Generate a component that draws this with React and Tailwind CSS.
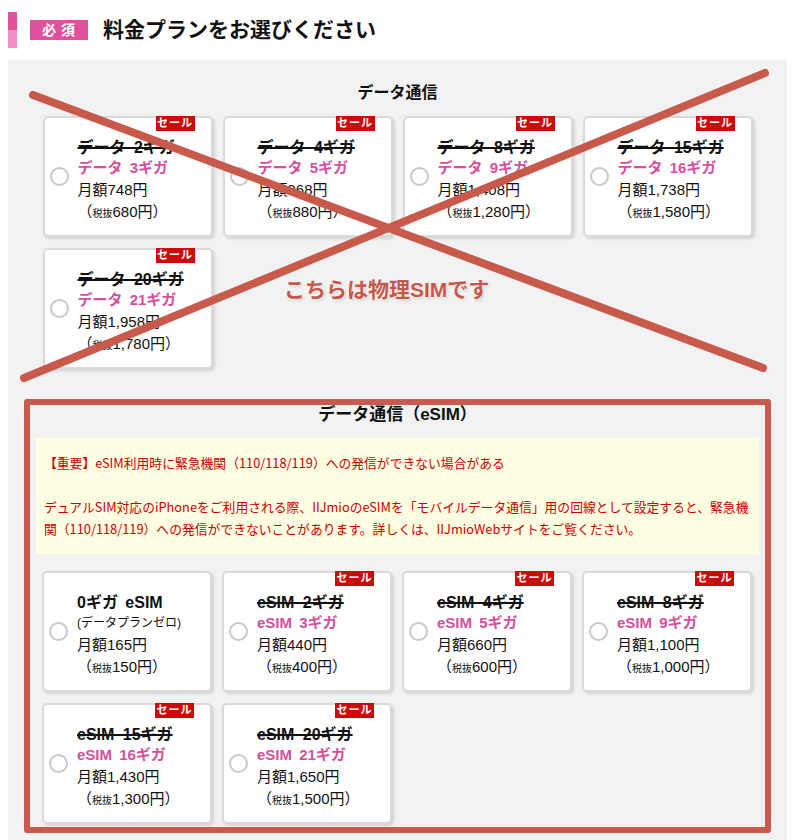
import React from "react";

const dataPlans = [
  { strike: "データ 2ギガ", pink: "データ 3ギガ", price: "748", tax: "680" },
  { strike: "データ 4ギガ", pink: "データ 5ギガ", price: "968", tax: "880" },
  { strike: "データ 8ギガ", pink: "データ 9ギガ", price: "1,408", tax: "1,280" },
  { strike: "データ 15ギガ", pink: "データ 16ギガ", price: "1,738", tax: "1,580" },
  { strike: "データ 20ギガ", pink: "データ 21ギガ", price: "1,958", tax: "1,780" },
];

const esimPlans = [
  { plain: "0ギガ eSIM", sub: "(データプランゼロ)", price: "165", tax: "150" },
  { strike: "eSIM 2ギガ", pink: "eSIM 3ギガ", price: "440", tax: "400" },
  { strike: "eSIM 4ギガ", pink: "eSIM 5ギガ", price: "660", tax: "600" },
  { strike: "eSIM 8ギガ", pink: "eSIM 9ギガ", price: "1,100", tax: "1,000" },
  { strike: "eSIM 15ギガ", pink: "eSIM 16ギガ", price: "1,430", tax: "1,300" },
  { strike: "eSIM 20ギガ", pink: "eSIM 21ギガ", price: "1,650", tax: "1,500" },
];

function Card({ p }) {
  const sale = !!p.strike;
  return (
    <div className="relative h-[121px] bg-white border-2 border-[#d9d9d9] rounded-[5px] shadow-[2px_2px_3px_rgba(0,0,0,0.13)] flex items-center pl-[5px]">
      {sale && (
        <div className="absolute top-[-2px] right-[16px] w-[39px] h-[15px] bg-[#cc0a0a] text-white text-[11px] font-bold leading-[15px] text-center tracking-[1px]">
          セール
        </div>
      )}
      <div className="w-[19px] h-[19px] rounded-full border-2 border-[#cacaca] bg-white shrink-0" />
      <div className="ml-[9px] pt-[9px] text-[#111]">
        {sale ? (
          <>
            <div className="text-[16px] font-bold leading-[20px] line-through decoration-[1.5px] whitespace-nowrap [word-spacing:4px]">
              {p.strike}
            </div>
            <div className="text-[15px] font-bold leading-[20px] text-[#d4509d] whitespace-nowrap [word-spacing:3px]">
              {p.pink}
            </div>
          </>
        ) : (
          <>
            <div className="text-[16px] font-bold leading-[20px] whitespace-nowrap [word-spacing:3px]">
              {p.plain}
            </div>
            <div className="text-[12px] leading-[20px] whitespace-nowrap">{p.sub}</div>
          </>
        )}
        <div className="text-[15px] leading-[24px] whitespace-nowrap">月額{p.price}円</div>
        <div className="text-[15px] leading-[20px] whitespace-nowrap">
          （<span className="text-[10px]">税抜</span>
          {p.tax}円）
        </div>
      </div>
    </div>
  );
}

export default function App() {
  return (
    <div className="relative w-[800px] h-[840px] overflow-hidden bg-white [font-family:'Liberation_Sans','Noto_Sans_CJK_JP',sans-serif]">
      {/* Header */}
      <div className="h-[60px] flex items-center pl-[8px]">
        <div className="w-[9px] h-[36px] flex flex-col">
          <div className="h-[18px] bg-[#e0529c]" />
          <div className="h-[18px] bg-[#f08fc4]" />
        </div>
        <div className="ml-[13px] w-[58px] h-[20px] bg-[#df519b] text-white text-[14px] font-bold leading-[20px] text-center tracking-[5px] pl-[4px]">
          必須
        </div>
        <div className="ml-[15px] text-[21px] font-bold text-[#111] leading-[28px]">
          料金プランをお選びください
        </div>
      </div>

      {/* Panel */}
      <div className="ml-[8px] w-[779px] bg-[#f2f2f2] px-[16px] pt-[21px] pb-[10px]">
        <div className="text-center text-[16px] font-bold leading-[24px] text-[#111]">データ通信</div>
        <div className="mt-[11px] w-[710px] mx-auto grid grid-cols-4 gap-x-[10px] gap-y-[11px]">
          {dataPlans.map((p, i) => (
            <Card key={i} p={p} />
          ))}
        </div>

        <div className="mt-[30px] border-[6px] border-[#c95b4e] rounded-[3px] pb-[3px]">
          <div className="text-center text-[17px] font-bold leading-[20px] text-[#111]">
            データ通信（eSIM）
          </div>
          <div className="mx-[6px] mt-[13px] bg-[#fefee2] px-[8px] py-[14px] text-[12.8px] leading-[22px] text-[#cc0000] [font-family:'Noto_Sans_CJK_JP',sans-serif]">
            <p className="whitespace-nowrap">【重要】eSIM利用時に緊急機関（110/118/119）への発信ができない場合がある</p>
            <p className="mt-[22px] whitespace-nowrap">
              デュアルSIM対応のiPhoneをご利用される際、IIJmioのeSIMを「モバイルデータ通信」用の回線として設定すると、緊急機
              <br />
              関（110/118/119）への発信ができないことがあります。詳しくは、IIJmioWebサイトをご覧ください。
            </p>
          </div>
          <div className="mt-[17px] ml-[12px] w-[710px] grid grid-cols-4 gap-x-[10px] gap-y-[11px]">
            {esimPlans.map((p, i) => (
              <Card key={i} p={p} />
            ))}
          </div>
        </div>
      </div>

      {/* Cross-out overlay */}
      <svg
        className="absolute left-0 top-0 pointer-events-none"
        width="800"
        height="840"
        viewBox="0 0 800 840"
      >
        <line x1="33" y1="95" x2="763" y2="368" stroke="#c85a4c" strokeWidth="8" strokeLinecap="round" />
        <line x1="765" y1="73" x2="24" y2="378" stroke="#c85a4c" strokeWidth="8" strokeLinecap="round" />
      </svg>
      <div className="absolute left-[284px] top-[276px] text-[21px] font-bold leading-[28px] text-[#c4584a] [text-shadow:0_0_2px_#fff,0_0_3px_#fff,1px_1px_3px_rgba(0,0,0,0.25)] whitespace-nowrap">
        こちらは物理SIMです
      </div>
    </div>
  );
}
